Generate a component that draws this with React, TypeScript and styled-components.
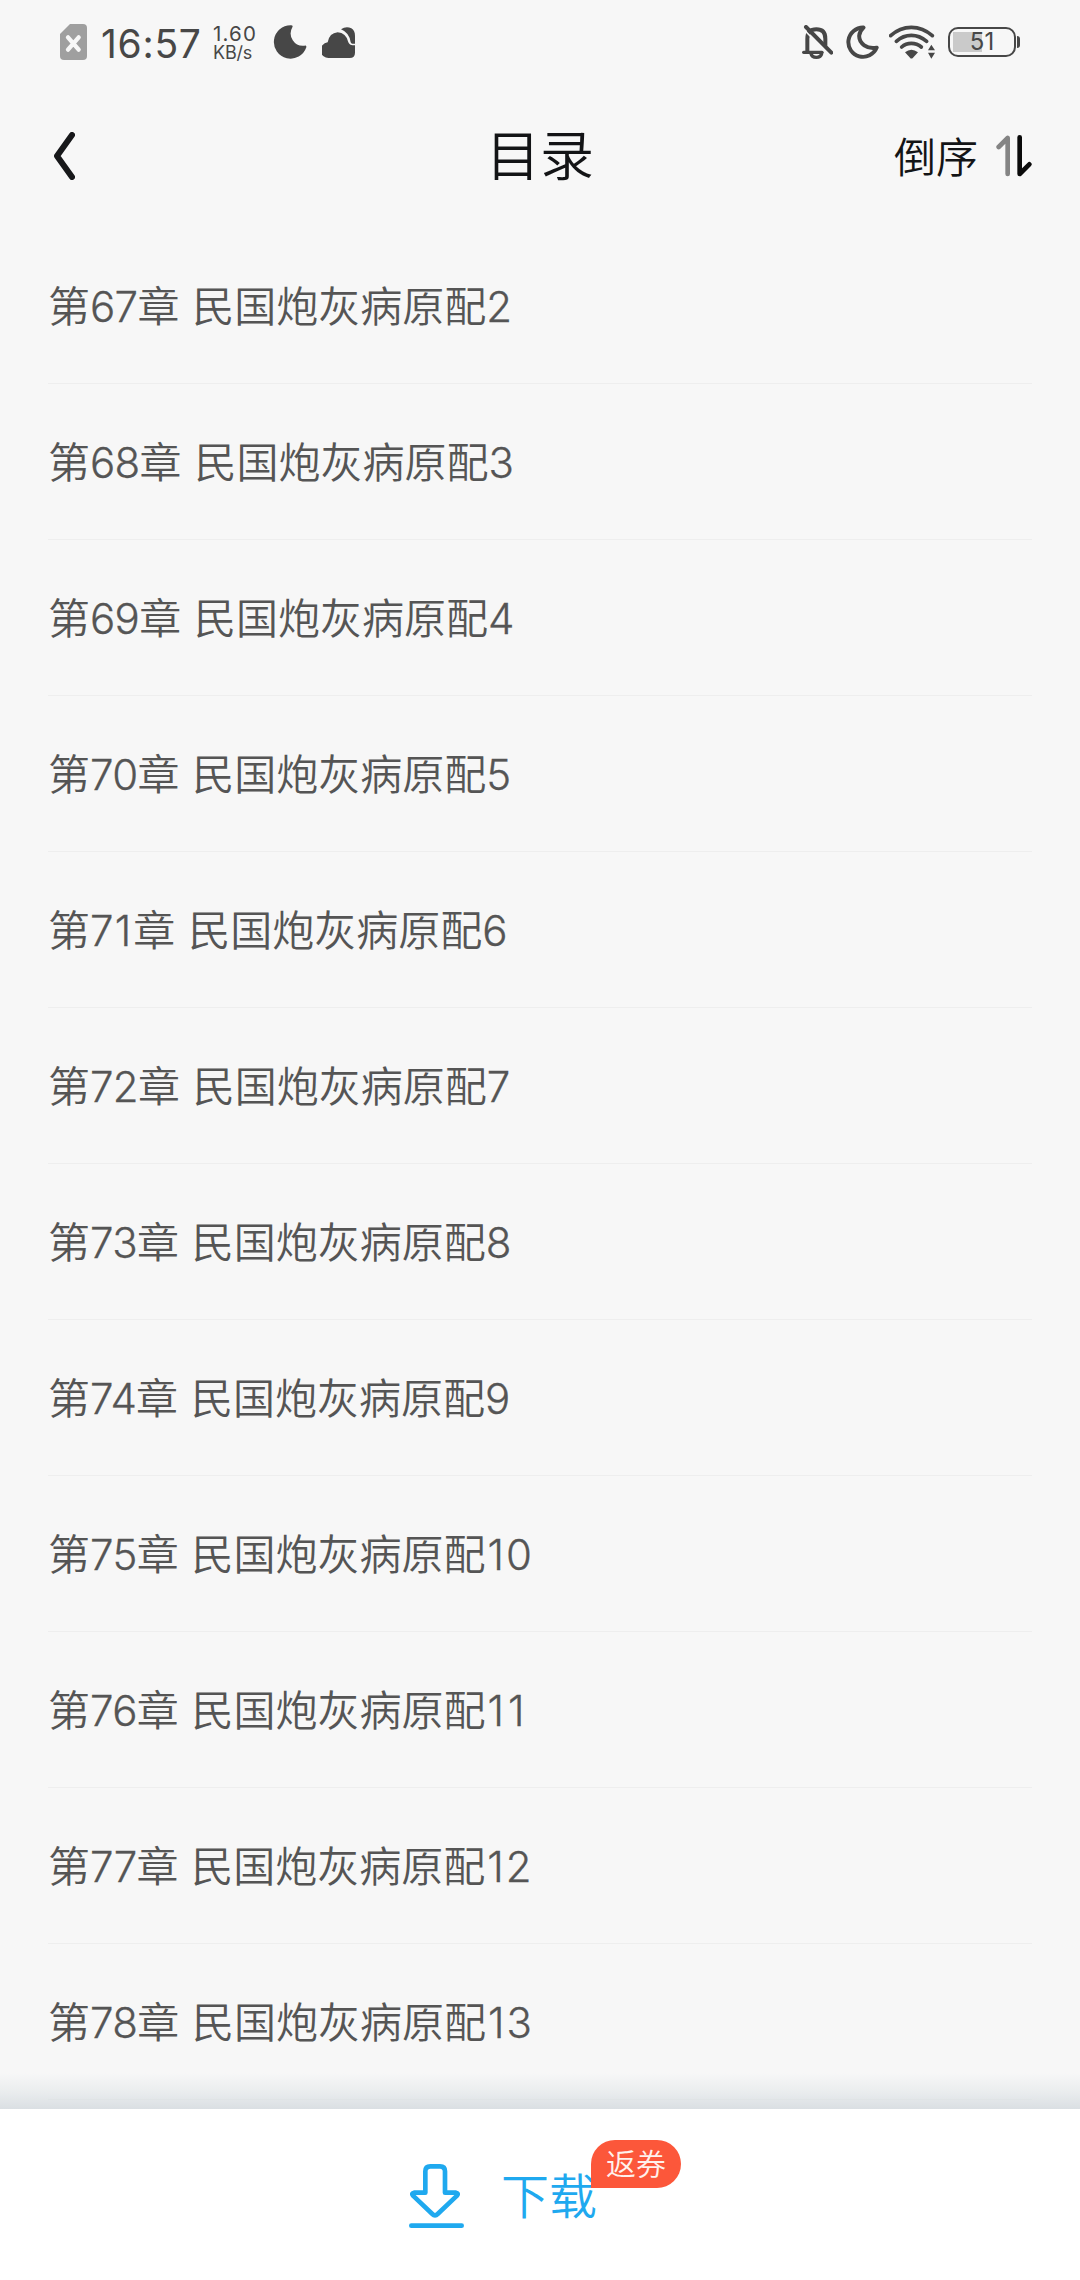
import React from "react";
import styled, { createGlobalStyle } from "styled-components";

const GlobalStyle = createGlobalStyle`
  * { box-sizing: border-box; }
  html, body { margin: 0; padding: 0; background: #f7f7f7; }
  body { font-family: Inter, "Noto Sans CJK SC", sans-serif; }
`;

const Screen = styled.div`
  width: 1080px;
  height: 2280px;
  display: flex;
  flex-direction: column;
  background: #f7f7f7;
  overflow: hidden;
`;

const StatusBar = styled.div`
  height: 84px;
  padding: 0 60px;
  display: flex;
  align-items: center;
  justify-content: space-between;
  color: #474747;
`;

const StatusGroup = styled.div`
  display: flex;
  align-items: center;
`;

const Glyph = styled.svg<{ $gap?: number }>`
  display: block;
  flex: none;
  margin-left: ${(p) => p.$gap ?? 0}px;
`;

const Clock = styled.span`
  width: 100px;
  margin-left: 14px;
  padding-top: 4px;
  font-size: 39px;
  line-height: 48px;
  font-weight: 400;
  letter-spacing: 0.7px;
  white-space: nowrap;
`;

const NetSpeed = styled.div`
  width: 46px;
  margin-left: 12px;
  padding-top: 2px;
  display: flex;
  flex-direction: column;
  white-space: nowrap;
`;

const SpeedValue = styled.span`
  font-size: 20.5px;
  line-height: 19px;
  letter-spacing: 1.2px;
`;

const SpeedUnit = styled.span`
  font-size: 18px;
  line-height: 20px;
  letter-spacing: -0.2px;
`;

const Battery = styled.div`
  display: flex;
  align-items: center;
  margin-left: 12px;
`;

const BatteryShell = styled.div`
  width: 68px;
  height: 30px;
  border: 2.5px solid #474747;
  border-radius: 10px;
  display: flex;
  align-items: center;
  justify-content: center;
  font-size: 24px;
  line-height: 24px;
  background: linear-gradient(#cacaca, #cacaca) 3px center / 29px 20px no-repeat;
`;

const BatteryNub = styled.div`
  width: 3px;
  height: 12px;
  margin-left: 1px;
  border-radius: 0 3px 3px 0;
  background: #474747;
`;

const Header = styled.header`
  height: 144px;
  padding: 0 48px;
  display: grid;
  grid-template-columns: 1fr auto 1fr;
  align-items: center;
  color: #131416;
`;

const BackButton = styled.button`
  justify-self: start;
  padding: 0 0 0 6px;
  border: 0;
  background: none;
`;

const Title = styled.h1`
  margin: 0;
  padding-top: 2px;
  font-size: 54px;
  line-height: 80px;
  font-weight: 350;
`;

const SortButton = styled.button`
  justify-self: end;
  display: flex;
  align-items: center;
  padding: 0;
  border: 0;
  background: none;
  color: inherit;
  font-family: inherit;
  font-size: 42px;
  line-height: 60px;
  font-weight: 350;
`;

const SortLabel = styled.span`
  padding-top: 4px;
`;

const ChapterList = styled.ul`
  flex: 1;
  min-height: 0;
  margin: 0;
  padding: 0 48px;
  list-style: none;
`;

const Chapter = styled.li`
  height: 156px;
  padding-top: 2px;
  display: flex;
  align-items: center;
  border-bottom: 1px solid rgba(0, 0, 0, 0.036);
  font-size: 42px;
  line-height: 60px;
  font-weight: 350;
  color: #555555;
  white-space: pre;
  word-spacing: 1px;
`;

const Digit = styled.span<{ $narrow: boolean }>`
  margin-left: ${(p) => (p.$narrow ? 2 : 0)}px;
  letter-spacing: ${(p) => (p.$narrow ? 2 : -0.7)}px;
  -webkit-text-stroke: 0.3px currentColor;
`;

const Footer = styled.footer`
  position: relative;
  height: 171px;
  display: flex;
  justify-content: center;
  background: #ffffff;

  &::before {
    content: "";
    position: absolute;
    left: 0;
    right: 0;
    bottom: 100%;
    height: 36px;
    background: linear-gradient(rgba(216, 222, 226, 0), rgba(216, 222, 226, 0.4) 50%, #dadfe3);
  }
`;

const DownloadButton = styled.button`
  position: relative;
  display: flex;
  align-items: center;
  width: 262px;
  padding: 2px 0 0;
  border: 0;
  background: none;
  color: #1fa9ef;
  font-family: inherit;
  font-size: 48px;
  font-weight: 350;
  white-space: nowrap;
`;

const DownloadLabel = styled.span`
  margin-left: 37px;
  padding-top: 2px;
  line-height: 70px;
`;

const CouponBadge = styled.span`
  position: absolute;
  left: 182px;
  top: 31px;
  width: 90px;
  height: 48px;
  display: flex;
  align-items: center;
  justify-content: center;
  border-radius: 24px 24px 24px 0;
  background: #fc573a;
  color: #fff1ec;
  font-size: 30px;
  line-height: 44px;
`;

const chapters = [
  { no: 67, part: 2 },
  { no: 68, part: 3 },
  { no: 69, part: 4 },
  { no: 70, part: 5 },
  { no: 71, part: 6 },
  { no: 72, part: 7 },
  { no: 73, part: 8 },
  { no: 74, part: 9 },
  { no: 75, part: 10 },
  { no: 76, part: 11 },
  { no: 77, part: 12 },
  { no: 78, part: 13 },
];

// The digit 1 is set with wider side bearings than the other figures.
const Figures = ({ value }: { value: number }) => (
  <span>
    {String(value)
      .split("")
      .map((d, i) => (
        <Digit key={i} $narrow={d === "1"}>
          {d}
        </Digit>
      ))}
  </span>
);

const SimIcon = () => (
  <Glyph width="27" height="36" viewBox="60 72 81 108">
    <path d="M90 72H129Q141 72 141 84V168Q141 180 129 180H72Q60 180 60 168V102Z" fill="#9f9f9f" />
    <path d="M84 112L116 149M116 112L84 149" stroke="#f7f7f7" strokeWidth="13" strokeLinecap="round" />
  </Glyph>
);

const MoonSolid = () => (
  <Glyph $gap={14} width="34" height="34" viewBox="698 76 102 102">
    <path d="M752 77A50 50 0 1 0 798 143Q799 136 792 138A37 37 0 0 1 756 83Q759 77 752 77Z" fill="#474747" />
  </Glyph>
);

const CloudIcon = () => (
  <Glyph $gap={15} width="33" height="33" viewBox="846 78 99 99">
    <path d="M868 174A23 23 0 0 1 863 127Q868 99 893 97Q918 98 925 127Q929 136 938 136H945V158Q945 174 929 174Z" fill="#474747" />
    <path d="M903 88Q918 78 934 85Q945 92 945 107V131H937Q933 131 932 127Q928 98 903 88Z" fill="#474747" />
  </Glyph>
);

const BellOff = () => (
  <Glyph width="31" height="35" viewBox="68 74 93 105" fill="none" stroke="#474747" strokeLinecap="round">
    <path d="M84 155V115C84 98 92 87 111 87C130 87 138 98 138 115V135" strokeWidth="12" />
    <path d="M73 156H128" strokeWidth="10" />
    <path d="M95 160C98 175 124 175 127 160" strokeWidth="10" />
    <path d="M72 86L144 160" stroke="#f7f7f7" strokeWidth="5" />
    <path d="M80 80L156 157" strokeWidth="12" />
  </Glyph>
);

const MoonOutline = () => (
  <Glyph $gap={13} width="33" height="34" viewBox="200 76 100 102" fill="none" stroke="#474747" strokeWidth="12" strokeLinejoin="round">
    <path d="M253 83A44.500 44.500 0 1 0 293 144C264 150 239 131 240 108Q241 94 253 83Z" />
  </Glyph>
);

const WifiIcon = () => (
  <Glyph $gap={10} width="47" height="35" viewBox="330 73 141 105" fill="none" stroke="#474747" strokeWidth="11" strokeLinecap="round">
    <path d="M335 105Q362 80 397 80T460 105" />
    <path d="M352 122Q372 104 397 104T443 122" />
    <path d="M368 139Q380 128 397 128T427 139" />
    <path d="M378 155Q397 140 417 155L402 171Q397 176 393 171Z" fill="#474747" stroke="none" />
    <path d="M457 132L447 149H468ZM447 156H468L457 174Z" fill="#474747" stroke="none" />
  </Glyph>
);

const BackIcon = () => (
  <Glyph width="21" height="48" viewBox="162 96 63 144" fill="none" stroke="#17181a" strokeWidth="18" strokeLinecap="round" strokeLinejoin="round">
    <path d="M216 105L171 168L216 231" />
  </Glyph>
);

const SortIcon = () => (
  <Glyph $gap={18} width="36" height="42" viewBox="409 105 108 126" fill="none" strokeWidth="14" strokeLinecap="round" strokeLinejoin="round">
    <path d="M417 141L444 114V222" stroke="#848484" />
    <path d="M480 112V222L509 193" stroke="#0a0a0a" />
  </Glyph>
);

const DownloadIcon = () => (
  <Glyph width="55" height="64" viewBox="87 252 165 192" fill="none" stroke="#1fa9ef" strokeWidth="14" strokeLinecap="round" strokeLinejoin="round">
    <path d="M136 338V274Q136 259 151 259H180Q195 259 195 274V338H228Q237 340 231 347L173 402Q165 410 157 402L99 347Q93 340 102 338Z" />
    <path d="M94 437H245" />
  </Glyph>
);

export default function App() {
  return (
    <>
      <GlobalStyle />
      <Screen>
        <StatusBar>
          <StatusGroup>
            <SimIcon />
            <Clock>16:57</Clock>
            <NetSpeed>
              <SpeedValue>1.60</SpeedValue>
              <SpeedUnit>KB/s</SpeedUnit>
            </NetSpeed>
            <MoonSolid />
            <CloudIcon />
          </StatusGroup>
          <StatusGroup>
            <BellOff />
            <MoonOutline />
            <WifiIcon />
            <Battery>
              <BatteryShell>51</BatteryShell>
              <BatteryNub />
            </Battery>
          </StatusGroup>
        </StatusBar>
        <Header>
          <BackButton aria-label="返回">
            <BackIcon />
          </BackButton>
          <Title>目录</Title>
          <SortButton>
            <SortLabel>倒序</SortLabel>
            <SortIcon />
          </SortButton>
        </Header>
        <ChapterList>
          {chapters.map(({ no, part }) => (
            <Chapter key={no}>
              第<Figures value={no} />章 民国炮灰病原配<Figures value={part} />
            </Chapter>
          ))}
        </ChapterList>
        <Footer>
          <DownloadButton>
            <DownloadIcon />
            <DownloadLabel>下载</DownloadLabel>
            <CouponBadge>返券</CouponBadge>
          </DownloadButton>
        </Footer>
      </Screen>
    </>
  );
}
